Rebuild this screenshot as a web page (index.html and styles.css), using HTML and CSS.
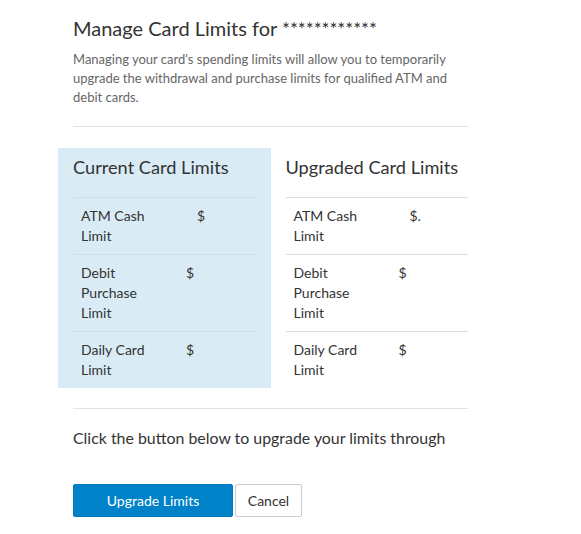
FILE: index.html
```html
<!DOCTYPE html>
<html>
<head>
<meta charset="utf-8">
<link rel="stylesheet" href="styles.css">
</head>
<body>
<div class="container">
  <div class="intro">
    <h1 class="title">Manage Card Limits for <span class="mask">************</span></h1>
    <p class="desc">Managing your card's spending limits will allow you to temporarily upgrade the withdrawal and purchase limits for qualified ATM and debit cards.</p>
  </div>
  <div class="sep"></div>
  <div class="cols">
    <div class="col col-current">
      <h2 class="col-title">Current Card Limits</h2>
      <div class="row"><div class="label">ATM Cash Limit</div><div class="value value-wide">$</div></div>
      <div class="row"><div class="label">Debit Purchase Limit</div><div class="value">$</div></div>
      <div class="row"><div class="label">Daily Card Limit</div><div class="value">$</div></div>
    </div>
    <div class="col">
      <h2 class="col-title">Upgraded Card Limits</h2>
      <div class="row"><div class="label">ATM Cash Limit</div><div class="value value-wide">$.</div></div>
      <div class="row"><div class="label">Debit Purchase Limit</div><div class="value">$</div></div>
      <div class="row"><div class="label">Daily Card Limit</div><div class="value">$</div></div>
    </div>
  </div>
  <div class="sep sep-bottom"></div>
  <p class="cta">Click the button below to upgrade your limits through</p>
  <div class="actions">
    <button class="btn btn-primary">Upgrade Limits</button>
    <button class="btn btn-default">Cancel</button>
  </div>
</div>
</body>
</html>
```
FILE: styles.css
```css
html, body {
  margin: 0;
  padding: 0;
  background: #fff;
}
body {
  font-family: Lato, "Open Sans", sans-serif;
  color: #333;
}
.container {
  width: 425px;
  margin-left: 58px;
}
.intro {
  padding: 0 15px;
}
.title {
  margin: 0;
  padding-top: 14px;
  font-size: 20px;
  line-height: 28px;
  height: 28px;
  font-weight: 400;
  color: #333;
}
.mask {
  font-size: 18.6px;
  line-height: 20px;
}
.desc {
  margin: 8px 0 0 0;
  font-size: 13px;
  line-height: 19px;
  color: #666;
}
.sep {
  margin: 19px 15px 0 15px;
  border-top: 1px solid #e3e3e3;
}
.cols {
  display: flex;
  margin-top: 21px;
}
.col {
  width: 213px;
  box-sizing: border-box;
  padding: 6px 15px 0 15px;
}
.col-current {
  background: #d9ecf6;
}
.col-title {
  margin: 0 0 17px 0;
  font-size: 18.2px;
  line-height: 26px;
  font-weight: 400;
  color: #333;
}
.row {
  display: flex;
  border-top: 1px solid #d6dde2;
  padding: 8px 8px 8px 8px;
  font-size: 14px;
  line-height: 20px;
}
.col:not(.col-current) .row {
  border-top-color: #dddddd;
}
.label {
  width: 72px;
  flex: none;
}
.value {
  flex: 1;
  margin-left: 33px;
}
.value-wide {
  margin-left: 44px;
}
.sep-bottom {
  margin-top: 20px;
}
.cta {
  margin: 18px 15px 0 15px;
  font-size: 15.9px;
  line-height: 22px;
  color: #333;
}
.actions {
  display: flex;
  gap: 2px;
  margin: 35px 15px 0 15px;
}
.btn {
  font-family: Lato, "Open Sans", sans-serif;
  font-size: 14px;
  height: 33px;
  border-radius: 2px;
  padding: 0;
  margin: 0;
  cursor: pointer;
}
.btn-primary {
  width: 160px;
  background: #0082c9;
  border: 1px solid #0079bd;
  color: #fff;
}
.btn-default {
  width: 67px;
  background: #fff;
  border: 1px solid #cccccc;
  color: #333;
}
```
